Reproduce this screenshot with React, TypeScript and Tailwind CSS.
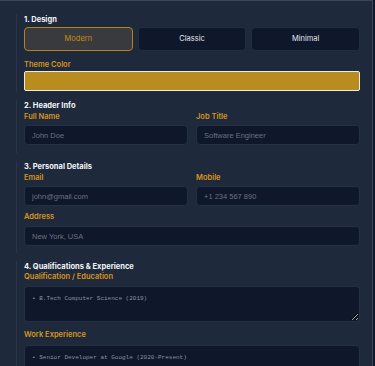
import React from 'react';

const label = 'block h-[10px] text-[7.5px] leading-[10px] font-semibold text-[#d9951a] font-["Inter",sans-serif]';
const field =
  'block h-[20px] w-full rounded-[4px] border border-[#243044] bg-[#0f172a] px-[7px] text-[7.5px] text-gray-300 font-["Liberation_Sans",Arial,sans-serif] outline-none placeholder:text-[#6b7280]';
const area =
  'block w-full rounded-[4px] border border-[#243044] bg-[#0f172a] px-[7px] py-[8px] text-[6px] leading-[8px] text-gray-300 font-["Liberation_Mono","DejaVu_Sans_Mono",monospace] outline-none placeholder:text-[#8b93a1]';

function Section({ title, className = '', children }: { title: string; className?: string; children: React.ReactNode }) {
  return (
    <section className={`border-l border-[#2a3648] pl-[7px] ${className}`}>
      <h2 className='h-[12px] text-[7.5px] leading-[12px] font-bold text-[#f1f5f9] font-["Inter",sans-serif]'>
        {title}
      </h2>
      {children}
    </section>
  );
}

export default function App() {
  const designs = ['Modern', 'Classic', 'Minimal'];
  return (
    <div className="flex h-[366px] w-[375px] overflow-hidden bg-[#111827]">
      <div className="h-full w-[373px] overflow-hidden border-t border-r border-[#3a4556] bg-[#1e293b] pl-4 pr-[12px] pt-[13px]">
        <Section title="1. Design" className="pb-[1px]">
          <div className="mt-[1px] grid grid-cols-3 gap-[5px]">
            {designs.map((d, i) => (
              <button
                key={d}
                type="button"
                className={`block h-[24px] rounded-[4px] border text-[7.5px] font-["Inter",sans-serif] ${
                  i === 0
                    ? 'border-[#b9801c] bg-[#383a3d] text-[#c98a1c]'
                    : 'border-[#222d3f] bg-[#0f172a] text-[#e2e8f0]'
                }`}
              >
                {d}
              </button>
            ))}
          </div>
          <span className={`${label} mt-[9px]`}>Theme Color</span>
          <div className="mt-[1px] h-[20px] w-full rounded-[2px] border-[1.5px] border-[#e8eaed] bg-[#b88c1e]" />
        </Section>

        <Section title="2. Header Info" className="mt-[8px] pb-[8px]">
          <div className="grid grid-cols-2 gap-[8px]">
            <div>
              <span className={label}>Full Name</span>
              <input className={`${field} mt-[3px]`} placeholder="John Doe" />
            </div>
            <div>
              <span className={label}>Job Title</span>
              <input className={`${field} mt-[3px]`} placeholder="Software Engineer" />
            </div>
          </div>
        </Section>

        <Section title="3. Personal Details" className="mt-[8px] pb-[7px]">
          <div className="grid grid-cols-2 gap-[8px]">
            <div>
              <span className={label}>Email</span>
              <input className={`${field} mt-[3px]`} placeholder="john@gmail.com" />
            </div>
            <div>
              <span className={label}>Mobile</span>
              <input className={`${field} mt-[3px]`} placeholder="+1 234 567 890" />
            </div>
          </div>
          <span className={`${label} mt-[6px]`}>Address</span>
          <input className={`${field} mt-[4px]`} placeholder="New York, USA" />
        </Section>

        <Section title="4. Qualifications & Experience" className="mt-[8px] pb-4">
          <span className={`${label} -mt-px`}>Qualification / Education</span>
          <textarea
            className={`${area} mt-[4px] h-[36px]`}
            placeholder="• B.Tech Computer Science (2019)"
          />
          <span className={`${label} mt-[8px]`}>Work Experience</span>
          <textarea
            className={`${area} mt-[5px] h-[36px]`}
            placeholder="• Senior Developer at Google (2020-Present)"
          />
        </Section>
      </div>
    </div>
  );
}
